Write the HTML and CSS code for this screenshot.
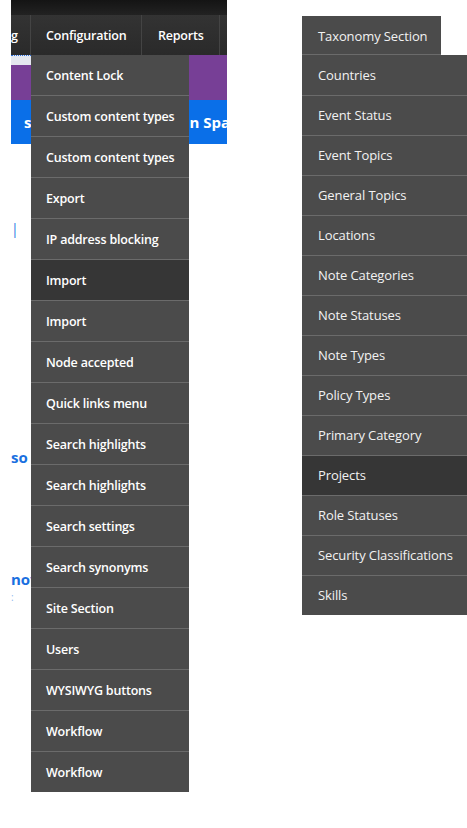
FILE: index.html
```html
<!DOCTYPE html>
<html>
<head>
<meta charset="utf-8">
<link rel="stylesheet" href="styles.css">
</head>
<body>
<div class="page">
  <div class="left">
    <div class="topstrip"></div>
    <nav class="nav">
      <span class="nav-item nav-g">g</span>
      <span class="nav-item nav-config">Configuration</span>
      <span class="nav-item nav-reports">Reports</span>
      <span class="nav-item nav-last"></span>
    </nav>
    <div class="purple"><div class="lightbox"></div></div>
    <div class="blue"><span class="blue-s">s</span><span class="blue-r">n Spac</span></div>
    <div class="frags">
      <span class="frag frag-bar">|</span>
      <span class="frag frag-so">so</span>
      <span class="frag frag-nov">nov</span>
      <span class="frag frag-colon">:</span>
    </div>
    <ul class="dropdown">
      <li>Content Lock</li>
      <li>Custom content types</li>
      <li>Custom content types</li>
      <li>Export</li>
      <li>IP address blocking</li>
      <li class="active">Import</li>
      <li>Import</li>
      <li>Node accepted</li>
      <li>Quick links menu</li>
      <li>Search highlights</li>
      <li>Search highlights</li>
      <li>Search settings</li>
      <li>Search synonyms</li>
      <li>Site Section</li>
      <li>Users</li>
      <li>WYSIWYG buttons</li>
      <li>Workflow</li>
      <li>Workflow</li>
    </ul>
  </div>
  <div class="taxonomy">
    <div class="tax-head">Taxonomy Section</div>
    <ul class="tax-list">
      <li>Countries</li>
      <li>Event Status</li>
      <li>Event Topics</li>
      <li>General Topics</li>
      <li>Locations</li>
      <li>Note Categories</li>
      <li>Note Statuses</li>
      <li>Note Types</li>
      <li>Policy Types</li>
      <li>Primary Category</li>
      <li class="active">Projects</li>
      <li>Role Statuses</li>
      <li>Security Classifications</li>
      <li>Skills</li>
    </ul>
  </div>
</div>
</body>
</html>
```
FILE: styles.css
```css
html, body {
  margin: 0;
  padding: 0;
  background: #fff;
  overflow: hidden;
  width: 467px;
  height: 828px;
}
body {
  font-family: "Open Sans", "Noto Sans", sans-serif;
}
ul { list-style: none; margin: 0; padding: 0; }

.page {
  display: flex;
  align-items: flex-start;
}

.left {
  position: relative;
  margin-left: 11px;
  width: 216px;
  flex: 0 0 216px;
  height: 828px;
}

.topstrip {
  height: 15px;
  background: linear-gradient(#141414, #222);
}

.nav {
  display: flex;
  height: 40px;
  background: linear-gradient(#333, #2a2a2a);
  color: #fff;
  font-size: 12.5px;
  font-weight: 600;
  letter-spacing: -0.2px;
  overflow: hidden;
}
.nav-item {
  display: flex;
  align-items: center;
  border-right: 1px solid #444;
  box-sizing: border-box;
  white-space: nowrap;
}
.nav-g {
  width: 20px;
  justify-content: flex-end;
  overflow: hidden;
  direction: rtl;
}
.nav-config {
  width: 111px;
  padding-left: 15px;
}
.nav-reports {
  width: 78px;
  padding-left: 16px;
}
.nav-last {
  flex: 1;
  border-right: none;
}

.purple {
  height: 45px;
  background: #773f96;
}
.lightbox {
  width: 20px;
  height: 10px;
  background: #e4e7ef;
  border-top: 1px dotted #2b6fe0;
  box-sizing: border-box;
}

.blue {
  height: 44px;
  background: #0a6fe8;
  color: #fff;
  font-weight: 700;
  font-size: 15px;
  display: flex;
  align-items: center;
  overflow: hidden;
  white-space: nowrap;
}
.blue-s { margin-left: 13px; }
.blue-r { margin-left: 158px; }

.frags {
  display: flex;
  flex-direction: column;
  align-items: flex-start;
  color: #1a6fe0;
  font-weight: 700;
  font-size: 15px;
  width: 20px;
}
.frag { display: block; line-height: 20px; white-space: nowrap; }
.frag-bar { margin-top: 75px; font-weight: 400; font-size: 14px; color: #2a78e4; }
.frag-so { margin-top: 208px; }
.frag-nov { margin-top: 102px; }
.frag-colon { margin-top: 3px; font-size: 10px; color: #8fb8ee; font-weight: 400; line-height: 10px; }

.dropdown {
  position: absolute;
  top: 55px;
  left: 20px;
  width: 158px;
  background: #4b4b4b;
  color: #fff;
  font-size: 12.5px;
  font-weight: 600;
  letter-spacing: -0.2px;
}
.dropdown li {
  height: 39px;
  padding-top: 1px;
  line-height: 40px;
  padding-left: 15px;
  border-top: 1px solid #6b6b6b;
  white-space: nowrap;
}
.dropdown li:first-child {
  border-top: none;
}
.dropdown li.active { background: #363636; }

.taxonomy {
  margin-left: 75px;
  margin-top: 16px;
  flex: 0 0 200px;
  color: #f2f2f2;
  font-size: 13px;
  letter-spacing: -0.1px;
}
.tax-head {
  width: 139px;
  height: 39px;
  line-height: 41px;
  padding-left: 16px;
  box-sizing: border-box;
  background: #4b4b4b;
  border-bottom: 1px solid #6b6b6b;
}
.tax-list {
  width: 200px;
  background: #4b4b4b;
}
.tax-list li {
  height: 39px;
  line-height: 39px;
  padding-left: 16px;
  border-top: 1px solid #6b6b6b;
  white-space: nowrap;
}
.tax-list li:first-child {
  border-top: none;
  height: 40px;
  line-height: 40px;
}
.tax-list li.active { background: #363636; }
```
